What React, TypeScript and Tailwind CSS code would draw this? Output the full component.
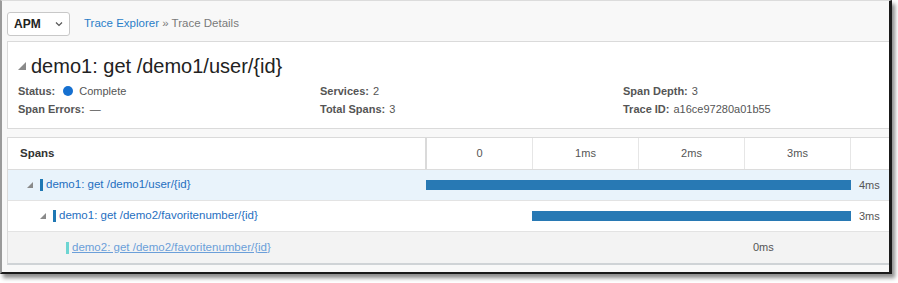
import React from "react";

const Tri = ({ size = 7 }: { size?: number }) => (
  <svg width={size} height={size} viewBox="0 0 10 10" className="shrink-0">
    <polygon points="10,0 10,10 0,10" fill="#8a8a8a" />
  </svg>
);

const ticks = ["0", "1ms", "2ms", "3ms", ""];
const MS = 106.25;

type Row = {
  name: string;
  indent: number;
  tri: boolean;
  marker: string;
  start: number;
  dur: number;
  label: string;
  bg: string;
  link?: boolean;
};

const rows: Row[] = [
  { name: "demo1: get /demo1/user/{id}", indent: 19, tri: true, marker: "#1f78b4", start: 0, dur: 4, label: "4ms", bg: "bg-[#e9f3fb]" },
  { name: "demo1: get /demo2/favoritenumber/{id}", indent: 32, tri: true, marker: "#1f78b4", start: 1, dur: 3, label: "3ms", bg: "bg-white" },
  { name: "demo2: get /demo2/favoritenumber/{id}", indent: 51, tri: false, marker: "#6dd5d2", start: 318 / 106.25, dur: 0, label: "0ms", bg: "bg-[#f3f3f3]", link: true },
];

export default function App() {
  return (
    <div className="w-[898px] h-[283px] bg-white relative" style={{ fontFamily: '"Liberation Sans", Arial, sans-serif' }}>
      <div className="w-[892px] h-[274px] bg-[#f8f8f8] border-l-2 border-l-[#9a9a9a] border-t border-t-[#dcdcdc] border-r-[3px] border-r-[#1a1a1a] border-b-2 border-b-[#1a1a1a] overflow-hidden shadow-[3px_4px_4px_rgba(0,0,0,0.45)] flex flex-col">
        {/* top bar */}
        <div className="h-[40px] flex items-center pl-[5px] shrink-0">
          <div className="w-[63px] h-[24px] mt-[6px] bg-white border border-[#c8c8c8] rounded-[3px] flex items-center justify-between pl-[6px] pr-[6px]">
            <span className="text-[12px] font-semibold text-[#222]">APM</span>
            <svg width="8" height="6" viewBox="0 0 8 6"><path d="M1 1.5 L4 4.5 L7 1.5" stroke="#555" strokeWidth="1.2" fill="none" /></svg>
          </div>
          <div className="ml-[14px] mt-[6px] text-[11.5px]">
            <span className="text-[#2a7ec8]">Trace Explorer</span>
            <span className="text-[#7a7a7a]"> » Trace Details</span>
          </div>
        </div>

        {/* header panel */}
        <div className="ml-[5px] w-[900px] h-[88px] bg-white border border-[#dadada] shrink-0 pl-[10px] pt-[11px]">
          <div className="flex items-center gap-[5px]">
            <Tri size={8} />
            <span className="text-[20px] text-[#222] leading-[26px]">demo1: get /demo1/user/{"{id}"}</span>
          </div>
          <div className="grid grid-cols-[302px_303px_300px] mt-[5px] text-[11px] text-[#555]">
            <div className="flex flex-col gap-[4px]">
              <div className="h-[14px] flex items-center">
                <span className="font-semibold">Status:</span>
                <span className="ml-[8px] w-[10px] h-[10px] rounded-full bg-[#1670d0] inline-block" />
                <span className="ml-[6px]">Complete</span>
              </div>
              <div className="h-[14px] flex items-center">
                <span className="font-semibold">Span Errors:</span>
                <span className="ml-[5px]">—</span>
              </div>
            </div>
            <div className="flex flex-col gap-[4px]">
              <div className="h-[14px] flex items-center"><span className="font-semibold">Services:</span><span className="ml-[4px]">2</span></div>
              <div className="h-[14px] flex items-center"><span className="font-semibold">Total Spans:</span><span className="ml-[4px]">3</span></div>
            </div>
            <div className="flex flex-col gap-[4px]">
              <div className="h-[14px] flex items-center"><span className="font-semibold">Span Depth:</span><span className="ml-[4px]">3</span></div>
              <div className="h-[14px] flex items-center"><span className="font-semibold">Trace ID:</span><span className="ml-[4px]">a16ce97280a01b55</span></div>
            </div>
          </div>
        </div>

        {/* spans table */}
        <div className="ml-[5px] mt-[8px] w-[900px] bg-white border-t border-l border-[#dadada] border-b-2 border-b-[#cfd3d6] shrink-0">
          <div className="h-[32px] flex border-b border-[#dcdcdc]">
            <div className="w-[419px] shrink-0 flex items-center pl-[12px] text-[11.5px] font-semibold text-[#333] border-r-2 border-[#dadada]">Spans</div>
            {ticks.map((t, i) => (
              <div key={i} className="w-[106px] shrink-0 flex items-center justify-center text-[11px] text-[#555] border-r border-[#e6e6e6]">{t}</div>
            ))}
          </div>
          {rows.map((r, i) => (
            <div key={i} className={`h-[31px] flex ${r.bg} ${i < rows.length - 1 ? "border-b border-[#e3e3e3]" : ""}`}>
              <div className="w-[419px] shrink-0 flex items-center" style={{ paddingLeft: r.indent }}>
                {r.tri ? <Tri size={6} /> : null}
                <span className="w-[3px] h-[12px] ml-[7px] shrink-0" style={{ background: r.marker }} />
                <span className={`ml-[3px] text-[11.5px] ${r.link ? "text-[#6b9fd9] underline" : "text-[#1f6fbf]"}`}>{r.name}</span>
              </div>
              <div className="flex-1 flex items-center relative">
                {r.dur > 0 ? (
                  <div className="h-[10px] bg-[#2879b4]" style={{ marginLeft: r.start * MS - 1, width: r.dur * MS }} />
                ) : (
                  <div style={{ marginLeft: r.start * MS }} />
                )}
                <span className="ml-[8px] text-[11px] text-[#555]">{r.label}</span>
              </div>
            </div>
          ))}
        </div>
      </div>
    </div>
  );
}
